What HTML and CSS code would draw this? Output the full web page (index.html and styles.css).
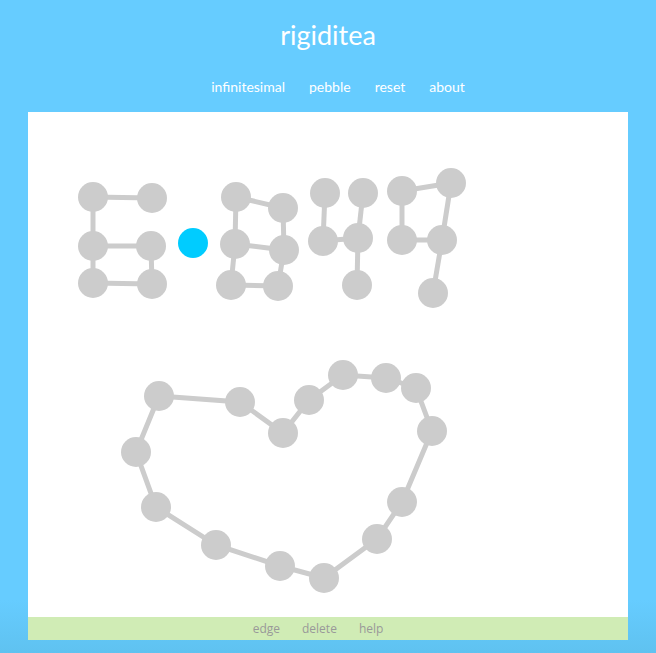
FILE: index.html
```html
<!DOCTYPE html>
<html>
<head>
<meta charset="utf-8">
<title>rigiditea</title>
<link rel="stylesheet" href="styles.css">
</head>
<body>
<header class="header">
  <h1 class="title">rigiditea</h1>
  <nav class="nav">
    <a class="nav-link" href="#">infinitesimal</a>
    <a class="nav-link" href="#">pebble</a>
    <a class="nav-link" href="#">reset</a>
    <a class="nav-link" href="#">about</a>
  </nav>
</header>
<main class="board">
  <svg class="canvas" width="600" height="505" viewBox="0 0 600 505">
    <g transform="translate(-28,-112)">
      <g class="edges">
        <!-- E -->
        <line x1="93" y1="197" x2="152" y2="198"/>
        <line x1="93" y1="197" x2="93" y2="246"/>
        <line x1="93" y1="246" x2="151" y2="246"/>
        <line x1="93" y1="246" x2="93" y2="283"/>
        <line x1="93" y1="283" x2="152" y2="284"/>
        <line x1="151" y1="246" x2="152" y2="284"/>
        <!-- 8 -->
        <line x1="236" y1="197" x2="283" y2="208"/>
        <line x1="236" y1="197" x2="235" y2="244"/>
        <line x1="283" y1="208" x2="284" y2="250"/>
        <line x1="235" y1="244" x2="284" y2="250"/>
        <line x1="235" y1="244" x2="231" y2="285"/>
        <line x1="284" y1="250" x2="278" y2="286"/>
        <line x1="231" y1="285" x2="278" y2="286"/>
        <!-- 4 -->
        <line x1="325" y1="193" x2="323" y2="241"/>
        <line x1="363" y1="193" x2="358" y2="238"/>
        <line x1="323" y1="241" x2="358" y2="238"/>
        <line x1="358" y1="238" x2="357" y2="285"/>
        <!-- 7 -->
        <line x1="402" y1="191" x2="451" y2="183"/>
        <line x1="402" y1="191" x2="402" y2="240"/>
        <line x1="402" y1="240" x2="442" y2="240"/>
        <line x1="451" y1="183" x2="442" y2="240"/>
        <line x1="442" y1="240" x2="433" y2="293"/>
        <!-- heart -->
        <polygon points="159,396 240,402 283,433 309,400 343,375 386,378 416,388 432,431 402,502 377,539 324,578 280,566 216,545 156,507 136,452"/>
      </g>
      <g class="nodes">
        <circle cx="93" cy="197" r="15"/>
        <circle cx="152" cy="198" r="15"/>
        <circle cx="93" cy="246" r="15"/>
        <circle cx="151" cy="246" r="15"/>
        <circle cx="93" cy="283" r="15"/>
        <circle cx="152" cy="284" r="15"/>

        <circle cx="236" cy="197" r="15"/>
        <circle cx="283" cy="208" r="15"/>
        <circle cx="235" cy="244" r="15"/>
        <circle cx="284" cy="250" r="15"/>
        <circle cx="231" cy="285" r="15"/>
        <circle cx="278" cy="286" r="15"/>

        <circle cx="325" cy="193" r="15"/>
        <circle cx="363" cy="193" r="15"/>
        <circle cx="323" cy="241" r="15"/>
        <circle cx="358" cy="238" r="15"/>
        <circle cx="357" cy="285" r="15"/>

        <circle cx="402" cy="191" r="15"/>
        <circle cx="451" cy="183" r="15"/>
        <circle cx="402" cy="240" r="15"/>
        <circle cx="442" cy="240" r="15"/>
        <circle cx="433" cy="293" r="15"/>

        <circle cx="159" cy="396" r="15"/>
        <circle cx="240" cy="402" r="15"/>
        <circle cx="283" cy="433" r="15"/>
        <circle cx="309" cy="400" r="15"/>
        <circle cx="343" cy="375" r="15"/>
        <circle cx="386" cy="378" r="15"/>
        <circle cx="416" cy="388" r="15"/>
        <circle cx="432" cy="431" r="15"/>
        <circle cx="402" cy="502" r="15"/>
        <circle cx="377" cy="539" r="15"/>
        <circle cx="324" cy="578" r="15"/>
        <circle cx="280" cy="566" r="15"/>
        <circle cx="216" cy="545" r="15"/>
        <circle cx="156" cy="507" r="15"/>
        <circle cx="136" cy="452" r="15"/>
      </g>
      <circle class="node-active" cx="193" cy="243" r="15"/>
    </g>
  </svg>
  <footer class="toolbar">
    <a class="tool" href="#">edge</a>
    <a class="tool" href="#">delete</a>
    <a class="tool" href="#">help</a>
  </footer>
</main>
</body>
</html>
```

FILE: styles.css
```css
html, body {
  margin: 0;
  padding: 0;
}
body {
  background: linear-gradient(to bottom, #66ccff 0, #66ccff 600px, #5fc2f0 653px);
  min-height: 653px;
  font-family: Lato, "Open Sans", sans-serif;
}
.header {
  display: flex;
  flex-direction: column;
  align-items: center;
}
.title {
  margin: 18px 0 0;
  height: 34px;
  font-size: 27px;
  line-height: 34px;
  font-weight: 400;
  color: #fff;
}
.nav {
  display: flex;
  gap: 24px;
  margin-top: 25px;
  padding-left: 20px;
  height: 35px;
  line-height: 20px;
}
.nav-link {
  color: #fff;
  text-decoration: none;
  font-size: 14px;
}
.board {
  width: 600px;
  margin: 0 auto;
  background: #fff;
}
.canvas {
  display: block;
}
.edges line, .edges polygon {
  stroke: #cccccc;
  stroke-width: 5;
  fill: none;
}
.nodes circle {
  fill: #cccccc;
}
.node-active {
  fill: #00ccff;
}
.toolbar {
  height: 23px;
  background: #d0ecb5;
  display: flex;
  justify-content: center;
  align-items: center;
  gap: 22px;
  padding-right: 20px;
}
.tool {
  color: #999;
  text-decoration: none;
  font-size: 12px;
  font-family: "Open Sans", Lato, sans-serif;
}
```
